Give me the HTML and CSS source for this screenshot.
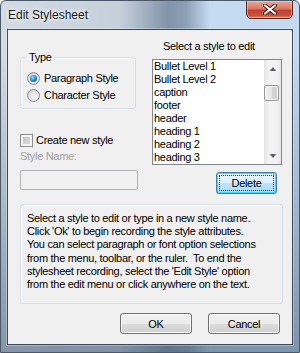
FILE: index.html
```html
<!DOCTYPE html>
<html lang="en">
<head>
    <meta charset="UTF-8">
    <title>Edit Stylesheet</title>
    <link rel="stylesheet" href="styles.css">
</head>
<body>
    <div class="window">
        <div class="titlebar">
            <span class="title">Edit Stylesheet</span>
            <button class="close" aria-label="Close">
                <svg width="14" height="11" viewBox="0 0 14 11">
                    <path d="M2 1.5 L12 9.5 M12 1.5 L2 9.5" stroke="#3b1410" stroke-width="4" stroke-linecap="round"/>
                    <path d="M2 1.5 L12 9.5 M12 1.5 L2 9.5" stroke="#ffffff" stroke-width="2.2" stroke-linecap="round"/>
                </svg>
            </button>
        </div>
        <div class="client">
            <div class="top">
                <div class="left">
                    <fieldset class="group">
                        <legend>Type</legend>
                        <label class="opt"><span class="radio checked"></span>Paragraph Style</label>
                        <label class="opt"><span class="radio"></span>Character Style</label>
                    </fieldset>
                    <label class="check-row"><span class="checkbox"></span>Create new style</label>
                    <div class="disabled-label">Style Name:</div>
                    <div class="textbox"></div>
                </div>
                <div class="right">
                    <div class="list-label">Select a style to edit</div>
                    <div class="listbox">
                        <ul class="items">
                            <li>Bullet Level 1</li>
                            <li>Bullet Level 2</li>
                            <li>caption</li>
                            <li>footer</li>
                            <li>header</li>
                            <li>heading 1</li>
                            <li>heading 2</li>
                            <li>heading 3</li>
                        </ul>
                        <div class="scrollbar">
                            <div class="arrow up"></div>
                            <div class="track"><div class="thumb"></div></div>
                            <div class="arrow down"></div>
                        </div>
                    </div>
                    <div class="delete-row">
                        <button class="btn default"><span class="focus">Delete</span></button>
                    </div>
                </div>
            </div>
            <div class="info">
                Select a style to edit or type in a new style name.<br>
                Click 'Ok' to begin recording the style attributes.<br>
                You can select paragraph or font option selections<br>
                from the menu, toolbar, or the ruler.&nbsp; To end the<br>
                stylesheet recording, select the 'Edit Style' option<br>
                from the edit menu or click anywhere on the text.
            </div>
            <div class="actions">
                <button class="btn">OK</button>
                <button class="btn">Cancel</button>
            </div>
        </div>
    </div>
</body>
</html>
```

FILE: styles.css
```css
body {
    margin: 0;
    background-color: #fff;
    font-family: "Liberation Sans", Arial, sans-serif;
    font-size: 11px;
    line-height: 13px;
    letter-spacing: -0.3px;
    color: #000;
}

.window {
    width: 300px;
    height: 353px;
    box-sizing: border-box;
    border: 1px solid #4a5868;
    border-radius: 6px 6px 0 0;
    background:
        linear-gradient(to bottom, rgba(70, 90, 115, 0) 15%, rgba(70, 90, 115, 0.55) 100%),
        linear-gradient(to right, #d3dbe4 0%, #c6d0db 40%, #8294a9 56%, #8c9fb4 62%, #c4dbf1 70%, #c2daf2 100%);
    overflow: hidden;
}

.titlebar {
    height: 28px;
    display: flex;
    justify-content: space-between;
    align-items: flex-start;
}

.title {
    padding: 7px 0 0 7px;
    font-size: 12px;
    line-height: 14px;
    letter-spacing: 0;
    color: #1a1a1a;
    text-shadow: 0 0 6px #fff, 0 0 3px #fff;
}

.close {
    width: 47px;
    height: 19px;
    margin: -1px 6px 0 0;
    padding: 0;
    border: 1px solid #5c2620;
    border-radius: 0 0 5px 5px;
    background: linear-gradient(to bottom, #e9a899 0%, #d97865 45%, #c2402e 55%, #c7533c 85%, #e08a68 100%);
    box-shadow: inset 0 0 0 1px rgba(255, 220, 210, 0.45);
    display: flex;
    align-items: center;
    justify-content: center;
}

.client {
    width: 286px;
    height: 316px;
    margin-left: 6px;
    box-sizing: border-box;
    border: 1px solid #3c4a5c;
    background-color: #f0f0f0;
    box-shadow: 0 0 0 1px rgba(255, 255, 255, 0.3);
}

.top {
    display: flex;
    padding-left: 12px;
}

.left {
    width: 117px;
    padding-top: 21px;
}

.group {
    width: 116px;
    height: 58px;
    box-sizing: border-box;
    margin: 0;
    padding: 6px 0 4px 6px;
    border: 1px solid #d5dfe5;
    border-radius: 3px;
    box-shadow: inset 1px 1px 0 #fff;
}

.group legend {
    padding: 0 2px;
    line-height: 13px;
}

.opt,
.check-row {
    display: flex;
    align-items: center;
    height: 17px;
    gap: 4px;
    white-space: nowrap;
}

.radio {
    width: 13px;
    height: 13px;
    box-sizing: border-box;
    border-radius: 50%;
    border: 1px solid #8c8e90;
    background: radial-gradient(circle at 60% 65%, #f8f8f8 0%, #e2e3e4 50%, #c9cacb 100%);
    display: flex;
    align-items: center;
    justify-content: center;
}

.radio.checked::after {
    content: "";
    width: 7px;
    height: 7px;
    border-radius: 50%;
    background: radial-gradient(circle at 40% 35%, #9fe0ff 0%, #2a8fd8 45%, #0c3f75 100%);
}

.check-row {
    height: 13px;
    margin-top: 25px;
    gap: 3px;
}

.checkbox {
    width: 13px;
    height: 13px;
    box-sizing: border-box;
    border: 1px solid #8e8f8f;
    background: linear-gradient(135deg, #b9bcbf 0%, #e8e8e8 100%);
    box-shadow: inset 0 0 0 2px #f4f4f4;
}

.disabled-label {
    margin-top: 3px;
    color: #a0a0a0;
}

.textbox {
    width: 118px;
    height: 20px;
    margin-top: 7px;
    box-sizing: border-box;
    border: 1px solid #adb2b5;
    border-radius: 2px;
    background-color: #f0f0f0;
}

.right {
    width: 130px;
    margin-left: 15px;
    padding-top: 10px;
}

.list-label {
    padding-left: 11px;
    white-space: nowrap;
}

.listbox {
    display: flex;
    height: 106px;
    margin-top: 6px;
    box-sizing: border-box;
    border: 1px solid #828790;
    background-color: #fff;
}

.items {
    flex: 1;
    margin: 0;
    padding: 0 0 0 1px;
    list-style: none;
}

.items li {
    height: 13px;
    line-height: 13px;
    white-space: nowrap;
}

.scrollbar {
    width: 17px;
    display: flex;
    flex-direction: column;
    background: linear-gradient(to right, #e3e3e3, #f3f3f3 30%, #f3f3f3 70%, #e8e8e8);
}

.arrow {
    height: 17px;
    display: flex;
    align-items: center;
    justify-content: center;
}

.arrow::after {
    content: "";
    border-left: 3px solid transparent;
    border-right: 3px solid transparent;
}

.arrow.up::after {
    border-bottom: 4px solid #59595f;
}

.arrow.down::after {
    border-top: 4px solid #59595f;
}

.track {
    flex: 1;
    padding-top: 8px;
}

.thumb {
    width: 15px;
    height: 16px;
    box-sizing: border-box;
    border: 1px solid #979797;
    border-radius: 2px;
    background: linear-gradient(to right, #f3f3f3, #e6e6e6 50%, #d6d6d6 51%, #d0d0d0);
    box-shadow: inset 0 0 0 1px #fbfbfb;
}

.delete-row {
    display: flex;
    justify-content: flex-end;
    margin-top: 7px;
    padding-right: 5px;
}

.btn {
    width: 72px;
    height: 21px;
    padding: 0;
    font-family: "Liberation Sans", Arial, sans-serif;
    font-size: 11px;
    letter-spacing: -0.3px;
    color: #000;
    border: 1px solid #707070;
    border-radius: 3px;
    background: linear-gradient(to bottom, #f2f2f2 0%, #ebebeb 50%, #dddddd 51%, #cfcfcf 100%);
    box-shadow: inset 0 0 0 1px #fcfcfc;
}

.btn.default {
    width: 61px;
    height: 22px;
    padding: 2px;
    border-color: #3c7fb1;
    background: linear-gradient(to bottom, #eaf6fd 0%, #d9f0fc 50%, #bee6fd 51%, #a7d9f5 100%);
    box-shadow: inset 0 0 0 1px #48d5fb;
}

.focus {
    display: flex;
    height: 100%;
    align-items: center;
    justify-content: center;
    box-sizing: border-box;
    border: 1px dotted #2c4a5c;
}

.info {
    width: 263px;
    height: 100px;
    margin: 10px 0 0 12px;
    box-sizing: border-box;
    padding: 7px 0 0 6px;
    border: 1px solid #d5dfe5;
    border-radius: 3px;
    box-shadow: inset 1px 1px 0 #fff;
    line-height: 13.2px;
    white-space: nowrap;
}

.actions {
    display: flex;
    justify-content: flex-end;
    gap: 16px;
    margin-top: 9px;
    padding-right: 12px;
}
```
